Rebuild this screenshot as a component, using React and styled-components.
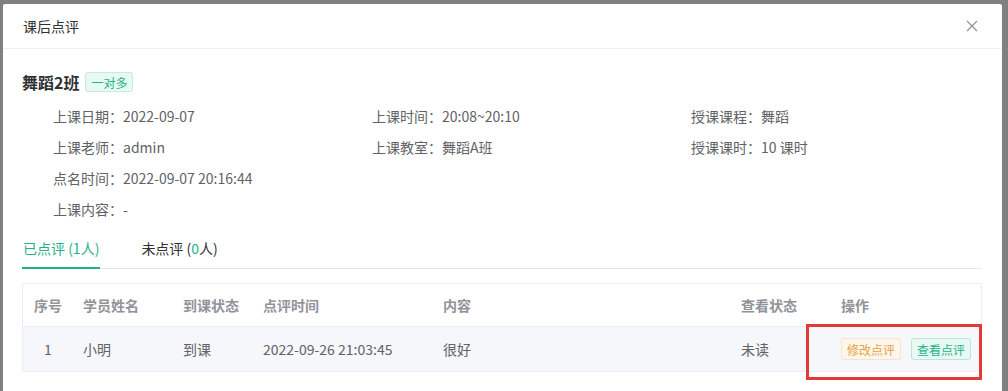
import React from 'react';
import styled, { createGlobalStyle } from 'styled-components';

const GlobalStyle = createGlobalStyle`
	html, body {
		margin: 0;
		padding: 0;
		background: #808080;
		overflow: hidden;
	}
	body {
		font-family: "Noto Sans CJK SC", "Noto Sans", sans-serif;
		font-size: 14px;
		color: #606266;
	}
`

const GREEN = '#1fb28a';

const Dialog = styled.div`
	margin: 4px 6px 0 3px;
	height: 400px;
	background: #fff;
	border-radius: 2px 2px 0 0;
	position: relative;
`

const Header = styled.div`
	height: 44px;
	display: flex;
	align-items: center;
	justify-content: space-between;
	padding: 0 20px;
	border-bottom: 1px solid #ebeef5;
	color: #303133;
	font-size: 14px;
`

const Close = styled.span`
	width: 12px;
	height: 12px;
	display: flex;
	margin-right: 4px;
`

const Body = styled.div`
	padding: 23px 20px 0 19px;
`

const TitleRow = styled.div`
	display: flex;
	align-items: center;
	gap: 6px;
	height: 20px;
`

const ClassName = styled.span`
	font-size: 16px;
	font-weight: 700;
	color: #303133;
`

const Tag = styled.span`
	height: 20px;
	box-sizing: border-box;
	padding: 0 5px;
	display: inline-flex;
	align-items: center;
	font-size: 12px;
	color: ${GREEN};
	background: #e8f8f2;
	border: 1px solid #c4eddd;
	border-radius: 3px;
`

const InfoGrid = styled.div`
	margin-top: 8px;
	padding-left: 31px;
	display: grid;
	grid-template-columns: 319px 319px 1fr;
	grid-auto-rows: 31px;
	align-items: center;
`

const Info = styled.div`
	color: #606266;
	white-space: nowrap;
`

const Tabs = styled.div`
	margin-top: 4px;
	display: flex;
	gap: 40px;
	height: 40px;
	border-bottom: 1px solid #e4e7ed;
`

const Tab = styled.div`
	display: flex;
	align-items: center;
	padding: 0 1px;
	color: ${p => (p.$active ? GREEN : '#303133')};
	border-bottom: 2px solid ${p => (p.$active ? GREEN : 'transparent')};
	margin-bottom: -1px;

	em {
		font-style: normal;
		color: ${GREEN};
	}
`

const Table = styled.div`
	margin-top: 14px;
	border: 1px solid #ebeef5;
	border-bottom: none;
	width: 960px;
	box-sizing: border-box;
`

const Row = styled.div`
	display: grid;
	grid-template-columns: 50px 100px 80px 180px 298px 100px 1fr;
	height: ${p => (p.$head ? '42px' : '44px')};
	align-items: center;
	background: ${p => (p.$head ? '#fff' : '#f5f7fa')};
	border-bottom: 1px solid #ebeef5;
`

const Cell = styled.div`
	padding: 0 10px;
	color: ${p => (p.$head ? '#909399' : '#606266')};
	font-weight: ${p => (p.$head ? 600 : 400)};
	white-space: nowrap;
	display: flex;
	justify-content: ${p => (p.$center ? 'center' : 'flex-start')};
	gap: 10px;
`

const Btn = styled.span`
	height: 22px;
	box-sizing: border-box;
	padding: 0 5px;
	display: inline-flex;
	align-items: center;
	font-size: 12px;
	border-radius: 3px;
	color: ${p => (p.$warn ? '#e6a23c' : GREEN)};
	background: ${p => (p.$warn ? '#fdf6ec' : '#e8f8f2')};
	border: 1px solid ${p => (p.$warn ? '#f8e3c5' : '#b5e9d6')};
`

const Highlight = styled.div`
	position: absolute;
	left: 803px;
	top: 320px;
	width: 176px;
	height: 56px;
	box-sizing: border-box;
	border: 3px solid #e53935;
	pointer-events: none;
`

const info = [
	['上课日期：2022-09-07', '上课时间：20:08~20:10', '授课课程：舞蹈'],
	['上课老师：admin', '上课教室：舞蹈A班', '授课课时：10 课时'],
	['点名时间：2022-09-07 20:16:44', '', ''],
	['上课内容：-', '', ''],
];

const App = () => {
	return (
		<>
			<GlobalStyle />
			<Dialog>
				<Header>
					<span>课后点评</span>
					<Close>
						<svg width="12" height="12" viewBox="0 0 12 12">
							<path d="M1 1L11 11M11 1L1 11" stroke="#909399" strokeWidth="1.2" />
						</svg>
					</Close>
				</Header>
				<Body>
					<TitleRow>
						<ClassName>舞蹈2班</ClassName>
						<Tag>一对多</Tag>
					</TitleRow>
					<InfoGrid>
						{info.flat().map((t, i) => <Info key={i}>{t}</Info>)}
					</InfoGrid>
					<Tabs>
						<Tab $active>已点评 (1人)</Tab>
						<Tab>未点评 (<em>0</em>人)</Tab>
					</Tabs>
					<Table>
						<Row $head>
							<Cell $head $center>序号</Cell>
							<Cell $head>学员姓名</Cell>
							<Cell $head>到课状态</Cell>
							<Cell $head>点评时间</Cell>
							<Cell $head>内容</Cell>
							<Cell $head>查看状态</Cell>
							<Cell $head>操作</Cell>
						</Row>
						<Row>
							<Cell $center>1</Cell>
							<Cell>小明</Cell>
							<Cell>到课</Cell>
							<Cell>2022-09-26 21:03:45</Cell>
							<Cell>很好</Cell>
							<Cell>未读</Cell>
							<Cell>
								<Btn $warn>修改点评</Btn>
								<Btn>查看点评</Btn>
							</Cell>
						</Row>
					</Table>
				</Body>
				<Highlight />
			</Dialog>
		</>
	);
};

export default App;
